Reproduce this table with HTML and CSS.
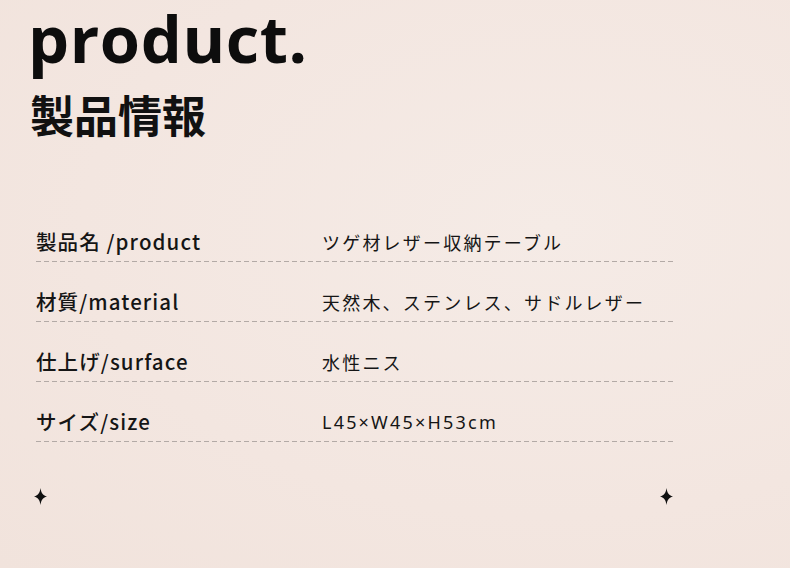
FILE: index.html
```html
<!DOCTYPE html>
<html lang="ja">
<head>
<meta charset="utf-8">
<link rel="stylesheet" href="styles.css">
</head>
<body>
<div class="page">
  <header class="head">
    <div class="title-en">product.</div>
    <div class="title-ja">製品情報</div>
  </header>
  <div class="table">
    <div class="row"><div class="label">製品名 /product</div><div class="value">ツゲ材レザー収納テーブル</div></div>
    <div class="row"><div class="label">材質/material</div><div class="value">天然木、ステンレス、サドルレザー</div></div>
    <div class="row"><div class="label">仕上げ/surface</div><div class="value">水性ニス</div></div>
    <div class="row"><div class="label">サイズ/size</div><div class="value latin">L45×W45×H53cm</div></div>
  </div>
  <div class="stars">
    <svg class="star" viewBox="0 0 13 17" width="13" height="17"><path d="M6.5 0 C7.3 4.8 8.4 7 13 8.5 C8.4 10 7.3 12.2 6.5 17 C5.7 12.2 4.6 10 0 8.5 C4.6 7 5.7 4.8 6.5 0 Z" fill="#111"/></svg>
    <svg class="star" viewBox="0 0 13 17" width="13" height="17"><path d="M6.5 0 C7.3 4.8 8.4 7 13 8.5 C8.4 10 7.3 12.2 6.5 17 C5.7 12.2 4.6 10 0 8.5 C4.6 7 5.7 4.8 6.5 0 Z" fill="#111"/></svg>
  </div>
</div>
</body>
</html>
```
FILE: styles.css
```css
html, body {
  margin: 0;
  padding: 0;
}
body {
  width: 790px;
  height: 568px;
  overflow: hidden;
  background: #f3e6e0;
  font-family: "Noto Sans CJK JP", "Noto Sans", sans-serif;
  color: #111;
}
.page {
  width: 790px;
  height: 568px;
  background: radial-gradient(ellipse at 70% 40%, #f5ebe6 0%, #f3e6e0 60%, #f1e3dc 100%);
}
.head {
  padding: 0 0 0 28px;
}
.title-en {
  font-family: "Open Sans", "Noto Sans", sans-serif;
  font-weight: 700;
  font-size: 65px;
  line-height: 76px;
  letter-spacing: 0.6px;
  color: #0d0d0d;
}
.title-ja {
  font-weight: 700;
  font-size: 44px;
  line-height: 48px;
  margin-top: 14px;
  padding-left: 2px;
  color: #111;
}
.table {
  margin: 74px 0 0 36px;
  width: 637px;
}
.row {
  display: flex;
  align-items: flex-end;
  background: repeating-linear-gradient(to right, #b3aaa6 0 5px, transparent 5px 8px) bottom left / 100% 1px no-repeat;
  padding-bottom: 8px;
  box-sizing: border-box;
  height: 60px;
}
.row:first-child {
  height: 50px;
}
.label {
  width: 286px;
  font-size: 20.5px;
  font-weight: 500;
  letter-spacing: 1.1px;
  line-height: 26px;
  color: #151515;
}
.value {
  font-size: 18px;
  letter-spacing: 2.2px;
  line-height: 24px;
  color: #151515;
  font-weight: 400;
}
.value.latin {
  font-family: "Noto Sans", "Noto Sans CJK JP", sans-serif;
  letter-spacing: 2.2px;
}
.stars {
  display: flex;
  justify-content: space-between;
  width: 639px;
  margin: 46px 0 0 34px;
}
.star {
  display: block;
}
```
